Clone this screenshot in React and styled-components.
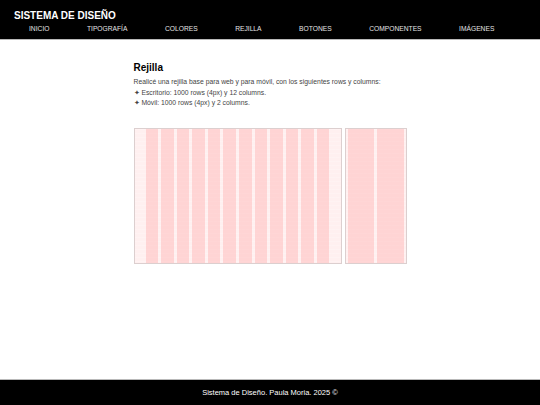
import React from 'react';
import styled, { createGlobalStyle } from 'styled-components';

const GlobalStyle = createGlobalStyle`
  html, body {
    margin: 0;
    padding: 0;
    background: #ffffff;
    font-family: 'Liberation Sans', Arial, sans-serif;
  }
`;

const StyledPage = styled.div`
  min-height: 100vh;
  display: flex;
  flex-direction: column;
`;

const StyledHeader = styled.header`
  background: #000000;
  border-bottom: 1px solid #b9b9b9;
  height: 40px;
  box-sizing: border-box;
  padding: 10px 0 0 14px;
`;

const StyledLogo = styled.h1`
  margin: 0;
  color: #ffffff;
  font-size: 10px;
  line-height: 12px;
  font-weight: 700;
`;

const StyledNav = styled.nav`
  display: flex;
  gap: 37.5px;
  padding-left: 15px;
  margin-top: 2px;
`;

const StyledNavItem = styled.a`
  color: #e4e4e4;
  font-size: 6.7px;
  line-height: 10px;
  text-transform: uppercase;
  text-decoration: none;
`;

const StyledMain = styled.main`
  flex: 1;
  width: 273px;
  margin: 0 auto;
  padding-top: 21px;
`;

const StyledTitle = styled.h2`
  margin: 0 0 3px 0;
  font-size: 10px;
  line-height: 13px;
  font-weight: 700;
  color: #000000;
`;

const StyledText = styled.p`
  margin: 0;
  font-size: 6.8px;
  line-height: 10.5px;
  color: #444444;
`;

const StyledGrids = styled.div`
  display: flex;
  gap: 3px;
  margin-top: 19px;
`;

const StyledGridImage = styled.div`
  width: ${props => props.width}px;
  height: 136px;
  box-sizing: border-box;
  border: 1px solid #dccfcf;
  background-color: #fff0f0;
  background-image: repeating-linear-gradient(
    to bottom,
    rgba(255, 255, 255, 0.18) 0px,
    rgba(255, 255, 255, 0.18) 1px,
    transparent 1px,
    transparent 4px
  );
  display: flex;
  gap: 3px;
  padding: 0 ${props => props.margin}px;
`;

const StyledColumn = styled.div`
  flex: 1;
  background: rgba(255, 190, 190, 0.55);
`;

const StyledFooter = styled.footer`
  background: #000000;
  border-top: 1px solid #b9b9b9;
  height: 25px;
  display: flex;
  align-items: center;
  justify-content: center;
  color: #ffffff;
  font-size: 7.5px;
`;

const navItems = ['Inicio', 'Tipografía', 'Colores', 'Rejilla', 'Botones', 'Componentes', 'Imágenes'];

const GridImage = ({ width, columns, margin }) => (
  <StyledGridImage width={width} margin={margin}>
    {Array.from({ length: columns }).map((_, i) => (
      <StyledColumn key={i} />
    ))}
  </StyledGridImage>
);

const App = () => {
  return (
    <StyledPage>
      <GlobalStyle />
      <StyledHeader>
        <StyledLogo>SISTEMA DE DISEÑO</StyledLogo>
        <StyledNav>
          {navItems.map(item => (
            <StyledNavItem key={item} href="#">{item}</StyledNavItem>
          ))}
        </StyledNav>
      </StyledHeader>

      <StyledMain>
        <StyledTitle>Rejilla</StyledTitle>
        <StyledText>Realicé una rejilla base para web y para móvil, con los siguientes rows y columns:</StyledText>
        <StyledText>✦ Escritorio: 1000 rows (4px) y 12 columns.</StyledText>
        <StyledText>✦ Móvil: 1000 rows (4px) y 2 columns.</StyledText>

        <StyledGrids>
          <GridImage width={208} columns={12} margin={11} />
          <GridImage width={62} columns={2} margin={2} />
        </StyledGrids>
      </StyledMain>

      <StyledFooter>Sistema de Diseño. Paula Moria. 2025 ©</StyledFooter>
    </StyledPage>
  );
};

export default App;
